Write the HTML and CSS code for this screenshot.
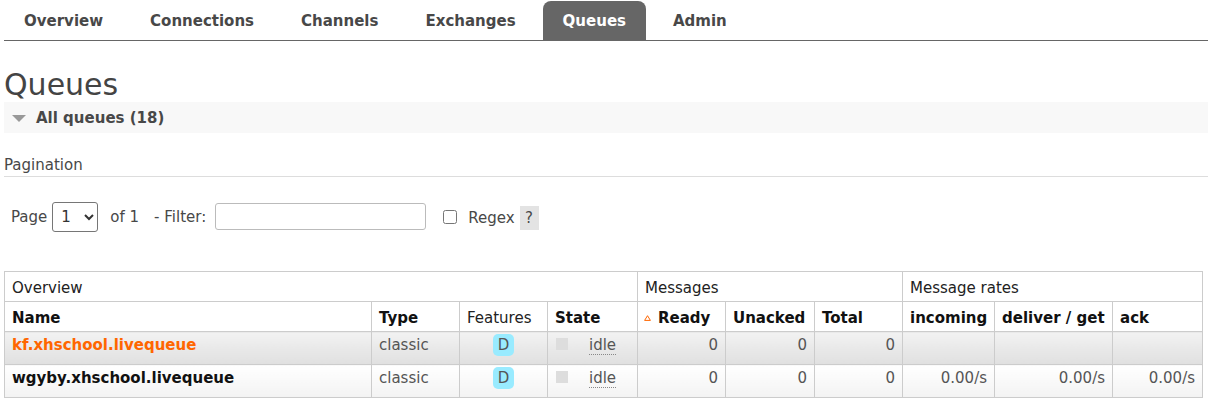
FILE: index.html
```html
<!DOCTYPE html>
<html lang="en">
<head>
  <meta charset="UTF-8">
  <title>RabbitMQ Management - Queues</title>
  <link rel="stylesheet" href="styles.css">
</head>
<body>
<div id="main">
  <ul id="tabs">
    <li><a href="#">Overview</a></li>
    <li><a href="#">Connections</a></li>
    <li><a href="#">Channels</a></li>
    <li><a href="#">Exchanges</a></li>
    <li><a href="#" class="selected">Queues</a></li>
    <li><a href="#">Admin</a></li>
  </ul>

  <h1>Queues</h1>

  <div class="section">
    <h2><span class="arrow"></span>All queues (18)</h2>
    <div class="hider">
      <h3>Pagination</h3>
      <div class="filter">
        <label class="page-label">Page</label>
        <select class="page-select">
          <option>1</option>
        </select>
        <span class="of">of 1</span>
        <label class="filter-label">- Filter:</label>
        <input type="text" class="filter-input">
        <input type="checkbox" class="regex-box">
        <label class="regex-label">Regex</label>
        <span class="help">?</span>
      </div>

      <table class="list">
        <colgroup>
          <col style="width:367px">
          <col style="width:88px">
          <col style="width:88px">
          <col style="width:90px">
          <col style="width:88px">
          <col style="width:89px">
          <col style="width:88px">
          <col style="width:92px">
          <col style="width:118px">
          <col style="width:90px">
        </colgroup>
        <thead>
          <tr class="group">
            <th colspan="4">Overview</th>
            <th colspan="3">Messages</th>
            <th colspan="3">Message rates</th>
          </tr>
          <tr class="cols">
            <th>Name</th>
            <th>Type</th>
            <th class="plain">Features</th>
            <th>State</th>
            <th><span class="sort"><svg width="7" height="6" viewBox="0 0 7 6"><path d="M3.5 0.7 L6.4 5.4 L0.6 5.4 Z" fill="none" stroke="#f60" stroke-width="1"/></svg></span>Ready</th>
            <th>Unacked</th>
            <th>Total</th>
            <th>incoming</th>
            <th>deliver / get</th>
            <th>ack</th>
          </tr>
        </thead>
        <tbody>
          <tr class="alt1">
            <td class="name"><a href="#" class="hover">kf.xhschool.livequeue</a></td>
            <td>classic</td>
            <td class="c"><abbr class="feature">D</abbr></td>
            <td><span class="status"></span><span class="idle">idle</span></td>
            <td class="r">0</td>
            <td class="r">0</td>
            <td class="r">0</td>
            <td class="r"></td>
            <td class="r"></td>
            <td class="r"></td>
          </tr>
          <tr class="alt2">
            <td class="name"><a href="#">wgyby.xhschool.livequeue</a></td>
            <td>classic</td>
            <td class="c"><abbr class="feature">D</abbr></td>
            <td><span class="status"></span><span class="idle">idle</span></td>
            <td class="r">0</td>
            <td class="r">0</td>
            <td class="r">0</td>
            <td class="r">0.00/s</td>
            <td class="r">0.00/s</td>
            <td class="r">0.00/s</td>
          </tr>
        </tbody>
      </table>
    </div>
  </div>
</div>
</body>
</html>
```

FILE: styles.css
```css
body {
  margin: 0;
  font-family: "DejaVu Sans", Verdana, sans-serif;
  font-size: 15px;
  color: #484848;
  background: #fff;
}
#main {
  padding-left: 4px;
}
#tabs {
  list-style: none;
  margin: 1px 0 0;
  padding: 0;
  display: flex;
  gap: 7px;
  border-bottom: 1px solid #666;
}
#tabs a {
  display: block;
  padding: 1px 20px 0;
  line-height: 38px;
  font-weight: bold;
  color: #484848;
  text-decoration: none;
  border-radius: 8px 8px 0 0;
}
#tabs a.selected {
  background: #666;
  color: #fff;
}
h1 {
  font-size: 30px;
  font-weight: normal;
  line-height: 35px;
  margin: 26px 0 0;
  color: #444;
}
.section h2 {
  display: flex;
  align-items: center;
  margin: 0;
  padding: 1px 0 0 8px;
  background: #f8f8f8;
  font-size: 15px;
  line-height: 30px;
  color: #484848;
}
.arrow {
  width: 0;
  height: 0;
  border-left: 7px solid transparent;
  border-right: 7px solid transparent;
  border-top: 7px solid #999;
  margin-right: 10px;
}
h3 {
  margin: 23px 0 0;
  padding-bottom: 2px;
  font-size: 15px;
  font-weight: normal;
  line-height: 18px;
  border-bottom: 1px solid #ddd;
}
.filter {
  display: flex;
  align-items: center;
  height: 31px;
  margin-top: 24px;
  padding-left: 7px;
}
.page-select {
  width: 46px;
  height: 30px;
  margin-left: 5px;
  padding: 0 4px;
  font-family: inherit;
  font-size: 15px;
  color: #333;
  background: #fff;
  border: 1px solid #767676;
  border-radius: 3px;
}
.of {
  margin-left: 12px;
}
.filter-label {
  margin-left: 15px;
}
.filter-input {
  width: 211px;
  height: 27px;
  margin: 0 0 0 9px;
  padding: 0 4px;
  box-sizing: border-box;
  border: 1px solid #bbb;
  border-radius: 3px;
  font-family: inherit;
  font-size: 15px;
}
.regex-box {
  width: 14px;
  height: 14px;
  margin: 0 0 0 17px;
}
.regex-label {
  margin-left: 11px;
  position: relative;
  top: 1px;
}
.help {
  display: inline-block;
  width: 19px;
  height: 24px;
  margin-left: 5px;
  line-height: 24px;
  text-align: center;
  background: #e3e3e3;
  position: relative;
  top: 1px;
}
table.list {
  margin-top: 39px;
  width: 1198px;
  table-layout: fixed;
  border-collapse: collapse;
}
table.list th,
table.list td {
  border: 1px solid #ccc;
  padding: 7px 7px 3px;
  text-align: left;
  line-height: 19px;
  white-space: nowrap;
  overflow: hidden;
}
table.list tr.group th {
  font-weight: normal;
  color: #222;
}
table.list tr.cols th {
  font-weight: bold;
  color: #111;
}
table.list tr.cols th.plain {
  font-weight: normal;
  color: #222;
}
.sort {
  display: inline-block;
  margin: 0 7px 0 -1px;
  vertical-align: 2px;
}
.sort svg {
  display: block;
}
table.list td {
  padding: 2px 7px 8px;
  line-height: 22px;
  color: #555;
}
table.list td.r {
  text-align: right;
}
table.list td.c {
  text-align: center;
}
tr.alt1 td {
  background: linear-gradient(#f2f2f2, #e0e0e0);
}
tr.alt2 td {
  background: linear-gradient(#fff, #f3f3f3);
}
td.name a {
  font-weight: bold;
  color: #111;
  text-decoration: none;
}
td.name a.hover {
  color: #f60;
}
.feature {
  display: inline-block;
  padding: 2px 5px;
  line-height: 18px;
  border-radius: 5px;
  background: #99ebff;
  color: #555;
  text-decoration: none;
}
.status {
  display: inline-block;
  width: 12px;
  height: 12px;
  margin: 0 21px 0 1px;
  background: #ddd;
}
.idle {
  border-bottom: 1px dotted #888;
}
```
